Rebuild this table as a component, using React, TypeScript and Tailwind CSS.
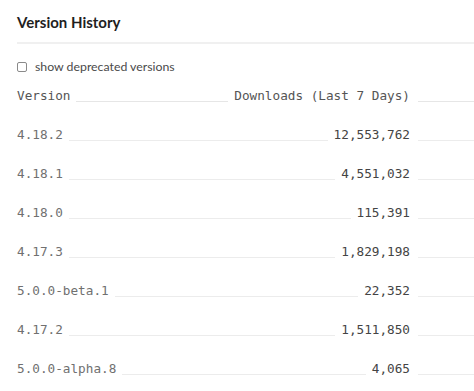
import React from 'react';

const ROWS: [string, string][] = [
  ['4.18.2', '12,553,762'],
  ['4.18.1', '4,551,032'],
  ['4.18.0', '115,391'],
  ['4.17.3', '1,829,198'],
  ['5.0.0-beta.1', '22,352'],
  ['4.17.2', '1,511,850'],
  ['5.0.0-alpha.8', '4,065'],
];

const mono = { fontFamily: '"DejaVu Sans Mono", monospace' };

export default function App() {
  return (
    <div className="w-[474px] h-[391px] overflow-hidden bg-white pl-[17px] font-['Lato',sans-serif]">
      <h2 className="pt-[12px] h-[42px] text-[15px] font-bold text-[#1f1f1f] leading-[20px]">Version History</h2>
      <div className="h-[2px] bg-[#f0f0f0]"></div>

      <label className="flex items-center gap-[8px] mt-[16px] h-[14px] text-[12.3px] text-[#4a4a4a]">
        <span className="w-[10px] h-[10px] rounded-[2px] border border-[#8a8a8a] bg-white"></span>
        show deprecated versions
      </label>

      <div className="text-[12.7px]" style={mono}>
        {/* header */}
        <div className="flex items-end h-[30px] text-[#555]">
          <div className="w-[213px] flex items-end">
            <span className="leading-[16px]">Version</span>
            <span className="flex-1 ml-[6px] mr-[2px] mb-[2px] h-px bg-[#e6e6e6]"></span>
          </div>
          <div className="w-[180px] flex items-end justify-end">
            <span className="leading-[16px]">Downloads (Last 7 Days)</span>
          </div>
          <span className="flex-1 ml-[8px] mb-[2px] h-px bg-[#e6e6e6]"></span>
        </div>

        {ROWS.map(([v, d]) => (
          <div key={v} className="flex items-end h-[39px]">
            <div className="w-[393px] flex items-end">
              <span className="leading-[16px] text-[#707070]">{v}</span>
              <span className="flex-1 ml-[6px] mr-[6px] mb-[2px] h-px bg-[#ececec]"></span>
              <span className="leading-[16px] text-[#444]">{d}</span>
            </div>
            <span className="flex-1 ml-[8px] mb-[2px] h-px bg-[#ececec]"></span>
          </div>
        ))}
      </div>
    </div>
  );
}
